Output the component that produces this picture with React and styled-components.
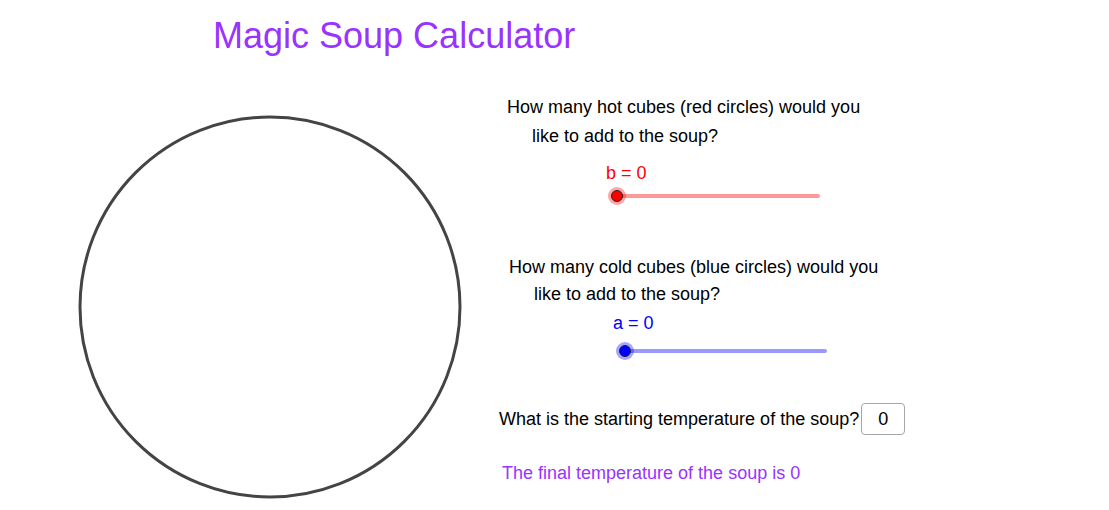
import React from 'react';
import styled, { createGlobalStyle } from 'styled-components';

const GlobalStyle = createGlobalStyle`
  html, body {
    margin: 0;
    padding: 0;
    background: #ffffff;
    font-family: "Liberation Sans", Arial, sans-serif;
  }
`;

const Page = styled.div`
  width: 1109px;
  height: 510px;
  overflow: hidden;
  display: flex;
  flex-direction: column;
`;

const Title = styled.h1`
  margin: 16px 0 0 213px;
  font-size: 36px;
  line-height: 40px;
  font-weight: normal;
  color: #9933ff;
`;

const Main = styled.div`
  display: flex;
  align-items: flex-start;
`;

const Soup = styled.svg`
  display: block;
  margin: 58px 0 0 77px;
  flex: none;
`;

const Panel = styled.div`
  display: flex;
  flex-direction: column;
  margin: 41px 0 0 36px;
`;

const Line = styled.div`
  margin-top: ${p => p.gap || 0}px;
  padding-left: ${p => p.indent || 0}px;
  font-size: 18px;
  line-height: 20px;
  height: 20px;
  color: ${p => p.color || '#000000'};
  white-space: nowrap;
`;

const SliderRow = styled.div`
  margin-top: ${p => p.gap}px;
  padding-left: ${p => p.indent}px;
  height: 20px;
`;

const InputRow = styled.div`
  margin-top: ${p => p.gap}px;
  display: flex;
  align-items: center;
  gap: 2px;
  font-size: 18px;
  white-space: nowrap;
`;

const NumberBox = styled.div`
  width: 42px;
  height: 30px;
  border: 1px solid #a6a6a6;
  border-radius: 4px;
  display: flex;
  align-items: center;
  justify-content: center;
  font-size: 18px;
  color: #000000;
`;

const Slider = ({ length, line, fill, halo }) => (
  <svg width={length + 12} height="20" style={{ display: 'block' }}>
    <line x1="9" y1="10" x2={length} y2="10" stroke={line} strokeWidth="4" strokeLinecap="round" />
    <circle cx="9" cy="10" r="9" fill={halo} />
    <circle cx="9" cy="10" r="5.5" fill={fill} stroke="#222222" strokeWidth="1" />
  </svg>
);

export default function App() {
  return (
    <Page>
      <GlobalStyle />
      <Title>Magic Soup Calculator</Title>
      <Main>
        <Soup width="386" height="386" viewBox="0 0 386 386">
          <circle cx="193" cy="193" r="190" fill="none" stroke="#444444" strokeWidth="3" />
        </Soup>
        <Panel>
          <Line indent={8}>How many hot cubes (red circles) would you</Line>
          <Line indent={33} gap={9}>like to add to the soup?</Line>
          <Line indent={107} gap={17} color="#ff0000">b = 0</Line>
          <SliderRow indent={109} gap={3}>
            <Slider length={210} line="#ff9999" fill="#ff0000" halo="rgba(255, 0, 0, 0.35)" />
          </SliderRow>
          <Line indent={10} gap={51}>How many cold cubes (blue circles) would you</Line>
          <Line indent={35} gap={7}>like to add to the soup?</Line>
          <Line indent={114} gap={9} color="#0000ff">a = 0</Line>
          <SliderRow indent={117} gap={8}>
            <Slider length={209} line="#9999ff" fill="#0000ff" halo="rgba(0, 0, 255, 0.35)" />
          </SliderRow>
          <InputRow gap={42}>
            What is the starting temperature of the soup?
            <NumberBox>0</NumberBox>
          </InputRow>
          <Line indent={3} gap={28} color="#9933ff">The final temperature of the soup is 0</Line>
        </Panel>
      </Main>
    </Page>
  );
}
